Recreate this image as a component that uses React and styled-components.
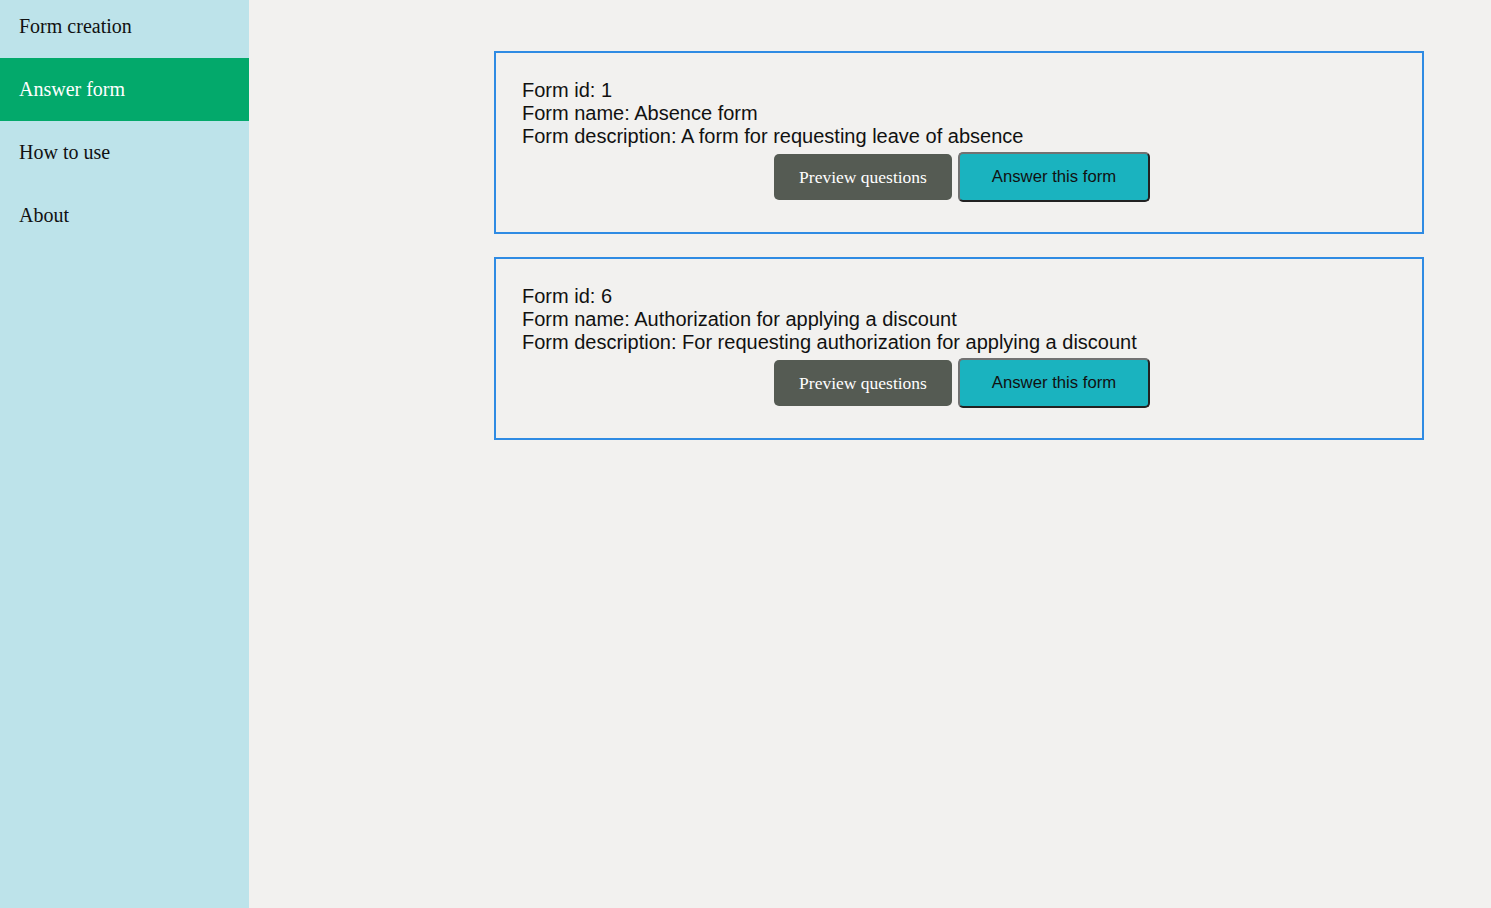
import React from "react";
import styled, { createGlobalStyle } from "styled-components";

const GlobalStyle = createGlobalStyle`
  html, body {
    margin: 0;
    padding: 0;
    background: #f2f1ef;
  }
  * {
    box-sizing: border-box;
  }
`;

const Page = styled.div`
  display: flex;
  min-height: 908px;
`;

const Sidebar = styled.nav`
  width: 249px;
  flex-shrink: 0;
  background: #bde3ea;
  overflow: hidden;
`;

const NavList = styled.div`
  display: flex;
  flex-direction: column;
  margin-top: -5px;
`;

const NavItem = styled.div`
  height: 63px;
  display: flex;
  align-items: center;
  padding-left: 19px;
  font-family: "Liberation Serif", "Times New Roman", serif;
  font-size: 20px;
  color: ${p => (p.active ? "#ffffff" : "#111111")};
  background: ${p => (p.active ? "#03a96b" : "transparent")};
`;

const Main = styled.main`
  flex: 1;
  padding: 51px 67px 40px 245px;
  display: flex;
  flex-direction: column;
  gap: 23px;
`;

const Card = styled.div`
  border: 2px solid #2f8be3;
  padding: 26px 26px 30px;
  font-family: "Liberation Sans", Arial, sans-serif;
  font-size: 20px;
  line-height: 23px;
  color: #111;
`;

const Buttons = styled.div`
  display: flex;
  justify-content: center;
  align-items: center;
  gap: 6px;
  margin-top: 4px;
  padding-left: 6px;
`;

const PreviewButton = styled.button`
  width: 178px;
  height: 46px;
  border: none;
  border-radius: 5px;
  background: #555b53;
  color: #ffffff;
  font-family: "Liberation Serif", "Times New Roman", serif;
  font-size: 17.5px;
`;

const AnswerButton = styled.button`
  width: 192px;
  height: 50px;
  border-radius: 5px;
  border-width: 2px;
  border-style: solid;
  border-color: #727272 #222222 #222222 #727272;
  background: #1ab3bf;
  color: #111;
  font-family: "Liberation Sans", Arial, sans-serif;
  font-size: 16.7px;
`;

const forms = [
  {
    id: 1,
    name: "Absence form",
    description: "A form for requesting leave of absence",
  },
  {
    id: 6,
    name: "Authorization for applying a discount",
    description: "For requesting authorization for applying a discount",
  },
];

const links = ["Form creation", "Answer form", "How to use", "About"];

export default function App() {
  return (
    <>
      <GlobalStyle />
      <Page>
        <Sidebar>
          <NavList>
            {links.map(l => (
              <NavItem key={l} active={l === "Answer form"}>
                {l}
              </NavItem>
            ))}
          </NavList>
        </Sidebar>
        <Main>
          {forms.map(f => (
            <Card key={f.id}>
              <div>Form id: {f.id}</div>
              <div>Form name: {f.name}</div>
              <div>Form description: {f.description}</div>
              <Buttons>
                <PreviewButton>Preview questions</PreviewButton>
                <AnswerButton>Answer this form</AnswerButton>
              </Buttons>
            </Card>
          ))}
        </Main>
      </Page>
    </>
  );
}
